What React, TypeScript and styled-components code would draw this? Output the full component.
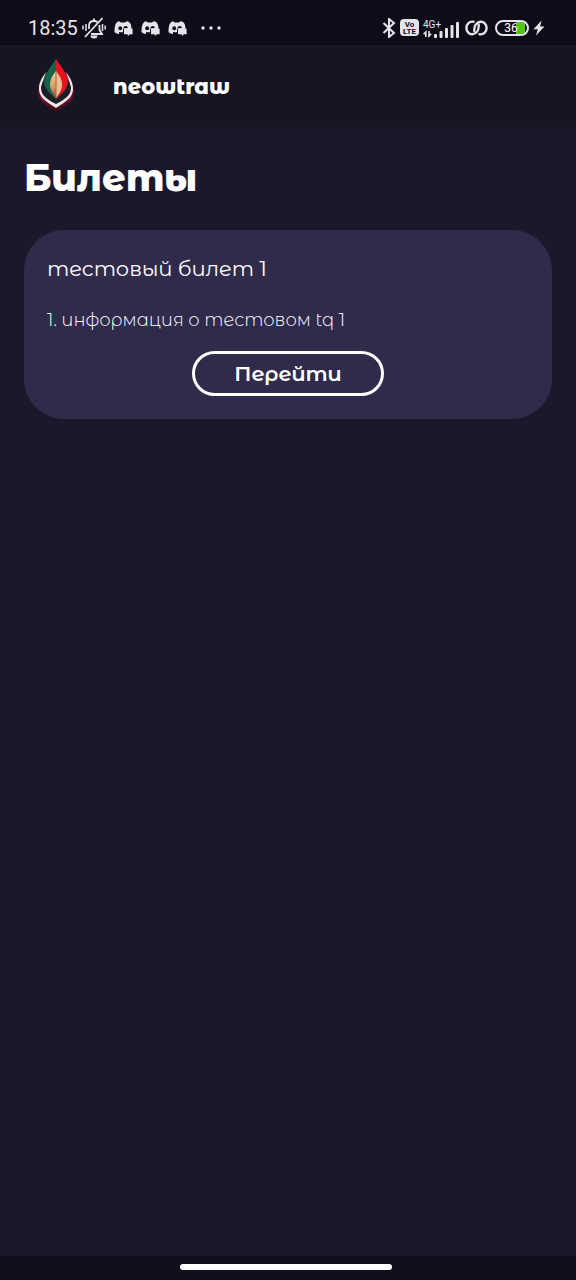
import React from "react";
import styled, { createGlobalStyle } from "styled-components";

const GlobalStyle = createGlobalStyle`
  * { box-sizing: border-box; }
  body {
    margin: 0;
    background: #1b182c;
    color: #ffffff;
    font-family: "Montserrat Alternates", Inter, "Open Sans", sans-serif;
  }
  h1, h2, p { margin: 0; }
`;

const Page = styled.div`
  display: flex;
  flex-direction: column;
  min-height: 100vh;
`;

const StatusBar = styled.div`
  display: flex;
  align-items: center;
  justify-content: space-between;
  height: 45px;
  padding: 10px 31px 0 28px;
  background: #0f0b19;
  color: #e6e4ea;
  font-family: Roboto, sans-serif;
`;

const StatusGroup = styled.div`
  display: flex;
  align-items: center;
`;

const Time = styled.span`
  font-size: 20px;
  line-height: 24px;
`;

const Notices = styled.div`
  display: flex;
  align-items: center;
  gap: 8px;
  margin-left: 4px;
`;

const Glyph = styled.svg`
  display: block;
  flex: none;
`;

const MoreNotices = styled.span`
  padding-left: 6px;
`;

const LinkStatus = styled.span`
  padding-left: 5px;
`;

const Header = styled.header`
  display: flex;
  align-items: center;
  gap: 35px;
  height: 82px;
  padding: 0 34px;
  background: #161524;
`;

const UserName = styled.span`
  padding-top: 2px;
  font-size: 21px;
  font-weight: 800;
  line-height: 32px;
`;

const Main = styled.main`
  flex: 1;
  padding: 27px 24px;
`;

const Title = styled.h1`
  margin-bottom: 28px;
  font-size: 37px;
  font-weight: 800;
  line-height: 48px;
`;

const Card = styled.article`
  display: flex;
  flex-direction: column;
  padding: 25px 23px 23px;
  border-radius: 40px;
  background: #302b4b;
`;

const CardTitle = styled.h2`
  margin-bottom: 24px;
  font-size: 21px;
  font-weight: 400;
  line-height: 28px;
`;

const CardText = styled.p`
  margin-bottom: 18px;
  font-size: 18px;
  font-weight: 300;
  line-height: 26px;
`;

const OutlineButton = styled.button`
  align-self: center;
  height: 45px;
  padding: 0 39px;
  border: 3px solid #ffffff;
  border-radius: 23px;
  background: transparent;
  color: inherit;
  font-family: inherit;
  font-size: 21px;
  font-weight: 600;
  line-height: 28px;
  cursor: pointer;
`;

const GestureBar = styled.div`
  display: flex;
  justify-content: center;
  height: 24px;
  padding: 8px 4px 0 0;
  background: #120e1b;
`;

const GestureHandle = styled.div`
  width: 37%;
  height: 6px;
  border-radius: 3px;
  background: #ffffff;
`;

const MutedBell = () => (
  <Glyph width="24" height="22" viewBox="0 0 24 22" fill="none" stroke="#e6e4ea" strokeWidth="1.8">
    <path d="M7 12V9C7 6 9 4 12 4q2 0 3.500 1.200M17.500 8v5l2.500 4H9" />
    <path d="M12 4V1.500M20.500 1 3 20" />
    <path d="M8.500 18.500a3.500 3 0 0 0 7 0z" fill="#e6e4ea" stroke="none" />
    <path d="M4 7v7M1 8.500v4M20.500 7v7M23.200 8.500v4" strokeWidth="1.500" />
  </Glyph>
);

const ChatFace = () => (
  <Glyph width="19" height="16" viewBox="0 0 19 16">
    <path
      d="M5 1.200 6.800 2.400h4L12.800 1.200c1.800.3 2.900 1 3.500 2.300.7 1.400 1.100 3 1.300 5.500H9v3.500H6L4.500 14C3 13.600 1.500 13 .5 12c0-4 .4-6.500 1.500-8.500C2.800 2.200 3.700 1.500 5 1.200z"
      fill="#e6e4ea"
    />
    <ellipse cx="6.200" cy="8.300" rx="1.900" ry="2" fill="#0f0b19" />
    <path d="M9.300 8.600c0-1.800 1.200-2.700 2.500-2.700s2 1 2 2.100z" fill="#0f0b19" />
    <path d="M10 8.800h8.600v5.400h-2.800L14 16l-.5-1.800H10z" fill="#e6e4ea" />
    <path d="M5 12.500c1.500.6 3 .6 4.500.4" stroke="#0f0b19" strokeWidth="1" fill="none" />
  </Glyph>
);

const MoreDots = () => (
  <Glyph width="20" height="4" viewBox="0 0 20 4" fill="#e6e4ea">
    <circle cx="2" cy="2" r="1.700" />
    <circle cx="10" cy="2" r="1.700" />
    <circle cx="18" cy="2" r="1.700" />
  </Glyph>
);

const Bluetooth = () => (
  <Glyph width="14" height="20" viewBox="0 0 14 20" fill="none" stroke="#e6e4ea" strokeWidth="2">
    <path d="m1.500 5 10.500 10L7 19V1l5 4L1.500 15" />
  </Glyph>
);

const VolteBadge = styled.span`
  display: flex;
  flex-direction: column;
  align-items: center;
  justify-content: center;
  width: 19px;
  height: 17px;
  margin: 0 4px;
  border-radius: 4px;
  background: #e6e4ea;
  color: #0f0b19;
  font-size: 8px;
  font-weight: 700;
  line-height: 7px;
`;

const Signal = styled.span`
  display: flex;
  align-items: flex-end;
  height: 20px;
`;

const NetworkLabel = styled.span`
  display: flex;
  flex-direction: column;
  width: 11px;
  font-size: 10px;
  line-height: 11px;
  white-space: nowrap;
`;

const DataArrows = () => (
  <Glyph width="9" height="8" viewBox="0 0 9 8" fill="none" stroke="#e6e4ea" strokeWidth="1.600">
    <path d="M2.800 7V2L.6 4.200M6 1v5l2.200-2.200" />
  </Glyph>
);

const SignalBars = () => (
  <Glyph width="26" height="17" viewBox="0 0 26 17" fill="#e6e4ea">
    <rect x="0" y="13" width="3" height="4" rx="1" />
    <rect x="5.500" y="10" width="3" height="7" rx="1" />
    <rect x="11" y="7" width="3" height="10" rx="1" />
    <rect x="16.500" y="4" width="3" height="13" rx="1" />
    <rect x="22" y="1" width="3" height="16" rx="1" />
  </Glyph>
);

const Rings = () => (
  <Glyph width="23" height="16" viewBox="0 0 23 16" fill="none" stroke="#e6e4ea" strokeWidth="2.400" strokeLinecap="round">
    <path d="M8.500 1.800C4.500 1 1.400 4 1.400 8s3 6.500 6 6.200c4.200-.4 6.600-4.200 6.300-9.400" />
    <path d="M14.500 14.200c4 .8 7.100-2.200 7.100-6.200s-3-6.500-6-6.200c-4.200.4-6.600 4.200-6.300 9.400" />
  </Glyph>
);

const Battery = styled.span`
  display: flex;
  align-items: center;
  justify-content: center;
  width: 34px;
  height: 16px;
  margin: 0 4px 0 7px;
  padding-right: 2px;
  border: 2px solid #e6e4ea;
  border-radius: 8px;
  background: linear-gradient(90deg, transparent 62%, #52c51a 62%, #52c51a 95%, transparent 95%) padding-box;
  color: #ffffff;
  font-size: 12px;
  font-weight: 400;
  line-height: 12px;
`;

const Bolt = () => (
  <Glyph width="12" height="16" viewBox="0 0 12 16" fill="#e6e4ea">
    <path d="M8.500.5.5 9.200h4.300L3 15.500l8.500-9H7.200z" />
  </Glyph>
);

const FlameLogo = () => (
  <Glyph width="44" height="56" viewBox="0 0 44 56" role="img" aria-label="neowtraw">
    <defs>
      <linearGradient id="core" x1="0" y1="0" x2="0" y2="1">
        <stop offset="0" stopColor="#f3d3a0" />
        <stop offset="0.6" stopColor="#d99a68" />
        <stop offset="1" stopColor="#8f4534" />
      </linearGradient>
      <linearGradient id="glow" x1="0" y1="0" x2="0" y2="1">
        <stop offset="0" stopColor="#4c1022" stopOpacity="0" />
        <stop offset="0.6" stopColor="#6d0f20" />
        <stop offset="1" stopColor="#3a0d1c" />
      </linearGradient>
    </defs>
    <path d="M8 18C3 25 2 33 6 41c3 5 10 9 16 13 6-4 13-8 16-13 4-8 3-16-2-23z" fill="url(#glow)" />
    <path d="M22 1C14 11 6 21 6 30c0 9 6 14 16 20 10-6 16-11 16-20C38 21 30 11 22 1z" fill="#1c1620" />
    <path d="M12 14C7 21 5 25 5 31c0 8 6 12 17 19 11-7 17-11 17-19 0-6-2-10-7-17l5 15c0 8-4 11-15 17C11 40 7 37 7 29z" fill="#efe7e8" />
    <path d="M9 23c-2 10 1 15 13 22 12-7 15-12 13-22z" fill="#19202a" />
    <path d="M22 1c-6 9-12 16-12 22 0 7 6 13 12 18z" fill="#17634a" />
    <path d="M22 1c6 9 12 16 12 22 0 7-6 13-12 18z" fill="#e91320" />
    <path d="M22 13c-5 6-6 10-6 14 0 5 3 9 6 13z" fill="url(#core)" />
    <path d="M22 13c5 6 6 10 6 14 0 5-3 9-6 13z" fill="#edbd91" />
    <path d="M22 13v27" stroke="#a96346" />
  </Glyph>
);

export default function App() {
  return (
    <>
      <GlobalStyle />
      <Page>
        <StatusBar>
          <StatusGroup>
            <Time>18:35</Time>
            <Notices>
              <MutedBell />
              <ChatFace />
              <ChatFace />
              <ChatFace />
              <MoreNotices>
                <MoreDots />
              </MoreNotices>
            </Notices>
          </StatusGroup>
          <StatusGroup>
            <Bluetooth />
            <VolteBadge>
              <span>Vo</span>
              <span>LTE</span>
            </VolteBadge>
            <Signal>
              <NetworkLabel>
                4G+
                <DataArrows />
              </NetworkLabel>
              <SignalBars />
            </Signal>
            <LinkStatus>
              <Rings />
            </LinkStatus>
            <Battery>36</Battery>
            <Bolt />
          </StatusGroup>
        </StatusBar>
        <Header>
          <FlameLogo />
          <UserName>neowtraw</UserName>
        </Header>
        <Main>
          <Title>Билеты</Title>
          <Card>
            <CardTitle>тестовый билет 1</CardTitle>
            <CardText>1. информация о тестовом tq 1</CardText>
            <OutlineButton type="button">Перейти</OutlineButton>
          </Card>
        </Main>
        <GestureBar>
          <GestureHandle />
        </GestureBar>
      </Page>
    </>
  );
}
